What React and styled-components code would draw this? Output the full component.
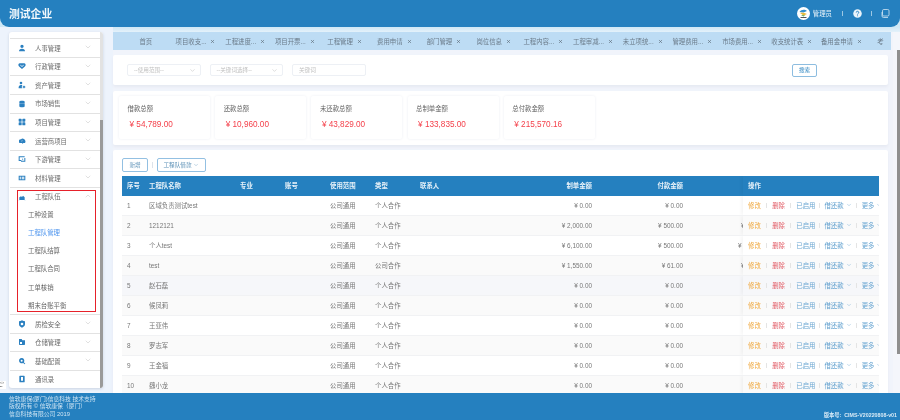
import React from 'react';
import styled, { createGlobalStyle } from 'styled-components';
import { ChevronDown, ChevronUp, X } from 'lucide-react';

const Global = createGlobalStyle`
  html, body { margin: 0; padding: 0; overflow: hidden; background: #eff3fb; }
  * { box-sizing: border-box; }
`;
const FONT = `"Liberation Sans", "Noto Sans CJK SC", sans-serif`;

const Shell = styled.div`
  position: relative; width: 900px; height: 420px; overflow: hidden;
  background: #f1f4fb; font-family: ${FONT}; font-size: 6.4px; color: #666;
  filter: blur(0.4px);
`;
const Header = styled.header`
  position: absolute; left: 0; top: 0; width: 900px; height: 27px; z-index: 3;
  background: #2580bf; border-radius: 0 0 9px 9px; color: #fff;
  display: flex; align-items: center; padding: 0 10px 0 9px;
`;
const TopBand = styled.div`
  position: absolute; left: 0; top: 0; width: 900px; height: 32px; z-index: 1;
  background: linear-gradient(#cfe8f6 85%, #e4f1fa 100%);
`;
const Title = styled.h1`
  margin: 0 0 1px; font-size: 10.8px; font-weight: 700; flex: 1; color: #f2f8fc;
`;
const Avatar = styled.svg` width: 13px; height: 13px; display: block; `;
const UserName = styled.span` margin: 0 10px 0 3px; font-size: 6.4px; color: #e8f2f9; `;
const HeadSep = styled.i` width: 1px; height: 5px; background: #9cc7e3; `;
const HeadIcon = styled.svg`
  width: 9px; height: 9px; display: block; margin: ${p => p.$m};
`;
const LeftBand = styled.div`
  position: absolute; left: 0; top: 27px; width: 113px; height: 366px; background: #edf3fc; z-index: 1;
`;
const Sidebar = styled.nav`
  position: absolute; left: 9px; top: 32px; width: 94px; height: 356px; background: #fff; z-index: 2;
  border-radius: 3px; padding-top: 6.3px; overflow: hidden; box-shadow: 0 1px 3px #c9d3e2;
`;
const ScrollTrack = styled.div`
  position: absolute; right: 0; top: 0; bottom: 0; width: 3px; background: #e2e2e2;
`;
const ScrollThumb = styled.div`
  position: absolute; right: 0; top: 88px; bottom: 0; width: 3px; background: #9a9a9a;
`;
const MenuRow = styled.div`
  height: 18.6px; margin: 0 3px 0 1px; border-top: 1px solid #e2e2e2;
  display: flex; align-items: center; position: relative; padding-left: 25px; color: #6b6b6b; font-size: 6.4px;
`;
const MenuGlyph = styled.svg`
  position: absolute; left: 8px; top: 4.5px; width: 8px; height: 8px; fill: #2b80c0;
`;
const Caret = styled.span`
  position: absolute; right: 8px; top: 4px; color: #c2c2c2; display: flex;
`;
const SubRow = styled.div`
  height: 18.1px; display: flex; align-items: center; padding-left: 19px; font-size: 6.4px;
  margin-right: 3px; color: ${p => (p.$active ? '#4d94ee' : '#666')};
`;
const RedBox = styled.div`
  position: absolute; left: 8px; top: 158px; width: 79px; height: 122px;
  border: 1px solid #e6212a; pointer-events: none;
`;
const Side = styled.span`
  position: absolute; left: 0; top: 381px; width: 6px; font-size: 3.6px; line-height: 4px; color: #555; background: #fff; z-index: 2;
`;
const Tabs = styled.div`
  position: absolute; left: 113px; top: 32px; width: 778px; height: 18px; background: #bddcf4; z-index: 2;
  display: flex; padding-left: 8px; overflow: hidden;
`;
const Tab = styled.div`
  flex: 0 0 49.7px; display: flex; align-items: center; justify-content: center; color: #6a7a88;
  white-space: nowrap; font-size: 6.4px;
`;
const LastTab = styled(Tab)` flex: 0 0 25px; justify-content: flex-start; padding-left: 11px; `;
const TabLabel = styled.span` margin-right: 4px; `;
const TabClose = styled(X)` color: #5d6b78; flex: none; `;
const Panel = styled.section`
  position: absolute; left: 113px; width: 775px; top: ${p => p.$top}px; height: ${p => p.$h}px; z-index: 1;
  background: #fff; border-radius: 2px; box-shadow: 0 2px 3px #e6e9f2;
`;
const SearchBar = styled.div`
  display: flex; align-items: center; height: 100%; padding: 0 71px 0 14px; gap: 9px;
`;
const Select = styled.div`
  width: 73.5px; height: 12.5px; border: 1px solid #edf0f5; border-radius: 2px; color: #c0c0c0;
  display: flex; align-items: center; justify-content: space-between; padding: 0 4px 0 6px; font-size: 5.6px;
`;
const KeywordInput = styled(Select)` justify-content: flex-start; `;
const SearchBtn = styled.button`
  margin-left: auto; width: 25px; height: 13px; padding: 0; background: #fff; font: 5.6px ${FONT};
  border: 1px solid #8dbde0; border-radius: 2px; color: #2580bf;
`;
const Cards = styled.div` display: flex; gap: 5.2px; padding: 5px 6px; `;
const Card = styled.div`
  width: 91px; height: 43px; background: #fff; border-radius: 2px; box-shadow: 0 0 3px #eceef4;
  padding: 9px 8.5px;
`;
const CardLabel = styled.div` font-size: 6.4px; color: #666; line-height: 7px; `;
const CardValue = styled.div` margin: 8px 0 0 2px; font-size: 8.2px; line-height: 9px; color: #f4414b; white-space: nowrap; `;
const Toolbar = styled.div`
  display: flex; align-items: center; height: 14px; margin: 8px 0 4px 9px;
`;
const ToolBtn = styled.button`
  height: 13.5px; width: ${p => p.$w}px; padding: 0; background: #fff; border: 1px solid #93c0e2;
  border-radius: 2px; color: #5f93b8; font: 5.6px ${FONT}; display: flex; align-items: center; justify-content: center; gap: 2px;
`;
const ToolSep = styled.i` width: 1px; height: 6px; background: #dde3ea; margin: 0 4px; `;
const TableWrap = styled.div` margin-left: 9px; width: 757px; `;
const Row = styled.div`
  position: relative; display: grid; overflow: hidden;
  grid-template-columns: 27px 91px 45px 45px 45px 45px 90px 82px 91px 1fr;
  align-items: center; height: ${p => (p.$head ? '19.5px' : '20px')};
  background: ${p => p.$head ? '#2580bf' : p.$bg};
  color: ${p => (p.$head ? '#e8f2f9' : '#777')};
  font-weight: ${p => (p.$head ? 700 : 400)};
  border-bottom: 1px solid ${p => (p.$head ? '#2580bf' : '#f1f2f4')};
  font-size: 6.4px;
`;
const Cell = styled.div`
  white-space: nowrap; text-align: ${p => (p.$right ? 'right' : 'left')};
  padding-left: ${p => (p.$seq ? '5px' : '0')}; color: inherit;
`;
const Peek = styled.span`
  position: absolute; left: ${p => p.$x}px; top: 50%; transform: translateY(-50%);
`;
const Fixed = styled.div`
  position: absolute; right: 0; top: 0; bottom: 0; width: 136px; display: flex; align-items: center;
  padding-left: 5px; background: ${p => (p.$head ? '#2580bf' : p.$bg)};
  box-shadow: -2px 0 3px rgba(0,0,0,0.04); white-space: nowrap;
`;
const Act = styled.span`
  color: ${p => p.$c}; display: inline-flex; align-items: center; gap: 2px; font-weight: 400;
`;
const ActSep = styled.i` width: 1px; height: 5px; background: #e4e4e4; margin: 0 ${p => p.$g}px; flex: none; `;
const Footer = styled.footer`
  position: absolute; left: 0; top: 393px; width: 900px; height: 27px; background: #2580bf; z-index: 4;
  color: #cfe4f3; font-size: 5.8px; padding: 2.5px 9px 0;
  display: flex; justify-content: space-between;
`;
const Copy = styled.div` line-height: 7.8px; `;
const Version = styled.div` align-self: flex-end; margin: 0 -6px 1px 0; font-size: 5.3px; font-weight: 700; color: #d9eaf6; `;
const PageBarTrack = styled.div` position: absolute; left: 893px; top: 32px; width: 7px; height: 361px; background: #f4f6fb; z-index: 1; `;
const PageBar = styled.div` position: absolute; left: 897px; top: 50px; width: 3px; height: 304px; background: #8f8f8f; z-index: 2; `;

const glyphs = {
  user: <path d="M12 2a5 5 0 1 1 0 10 5 5 0 0 1 0-10ZM3 22c0-5 3-8 9-8s9 3 9 8Z" />,
  heart: <path d="M1 9c0-4 4-5 6-5h10c2 0 6 1 6 5 0 3-7 9-11 12C8 18 1 12 1 9Zm5 0 6 6 6-6-1-1-5 4-5-4Z" />,
  asset: <path d="M9 2a4 4 0 1 1 0 8 4 4 0 0 1 0-8ZM2 22c-1-6 2-10 7-10 2 0 3 .5 4 1.5a6 6 0 0 0 0 8.500ZM18 14a4 4 0 1 1 0 8 4 4 0 0 1 0-8Zm0 2.500a1.500 1.500 0 1 0 0 3 1.500 1.500 0 0 0 0-3Z" />,
  market: <path d="M4 5c0-2 3-3 8-3s8 1 8 3v14c0 2-3 3-8 3s-8-1-8-3Zm8 7c3 0 6-.5 8-2v-1c-2 1.500-5 2-8 2s-6-.5-8-2v1c2 1.500 5 2 8 2Z" />,
  grid: <path d="M3 2h6a2 2 0 0 1 2 2v6a1 1 0 0 1-1 1H4a2 2 0 0 1-2-2V3a1 1 0 0 1 1-1Zm12 0h6a1 1 0 0 1 1 1v6a2 2 0 0 1-2 2h-6a1 1 0 0 1-1-1V4a2 2 0 0 1 2-2ZM4 13h6a1 1 0 0 1 1 1v6a2 2 0 0 1-2 2H3a1 1 0 0 1-1-1v-6a2 2 0 0 1 2-2Zm10 0h6a2 2 0 0 1 2 2v6a1 1 0 0 1-1 1h-6a2 2 0 0 1-2-2v-6a1 1 0 0 1 1-1Z" />,
  cloud: <path d="M3 14a6 6 0 0 1 6-7 7 7 0 0 1 12 3c2 2 2 6 0 8h-5l-3 4v-4H6c-2 0-3-2-3-4Zm7-1h3v-3l-4 3Z" />,
  screen: <path d="M2 4h18v3H5v8h5v3H2Zm20 5v11H9v-3h10V9Zm-9 1 3 3-3 3Z" />,
  panel: <path d="M2 5h20v14H2Zm3 3v3h4V8Zm6 0v3h8V8Zm-6 5v3h4v-3Zm6 0v3h8v-3Z" />,
  team: <path d="M4 22v-9l5-3 3 2 3-4 5 5v9ZM2 22h20v-1H2Z" />,
  shield: <path d="M12 1c3 2 6 3 9 3v9c0 5-4 8-9 10-5-2-9-5-9-10V4c3 0 6-1 9-3Zm0 7a4 4 0 1 0 0 8 4 4 0 0 0 0-8Z" />,
  store: <path d="M3 3h8l2 4h8v12a2 2 0 0 1-2 2H5a2 2 0 0 1-2-2Zm3 9v6h6v-6Z" />,
  search: <path d="M11 3a8 8 0 0 1 6.500 12.700L22 20l-2 2-4.500-4.300A8 8 0 1 1 11 3Zm0 5a3 3 0 1 0 0 6 3 3 0 0 0 0-6Z" />,
  phone: <path d="M6 2h12a2 2 0 0 1 2 2v16a2 2 0 0 1-2 2H6a2 2 0 0 1-2-2V4a2 2 0 0 1 2-2Zm3 4v11h6V6Z" />,
};

const menuTop = [
  ['人事管理', 'user'], ['行政管理', 'heart'], ['资产管理', 'asset'], ['市场销售', 'market'],
  ['项目管理', 'grid'], ['运营商项目', 'cloud'], ['下游管理', 'screen'], ['材料管理', 'panel'],
];
const subs = ['工种设置', '工程队管理', '工程队结算', '工程队合同', '工单核销', '期末台账平衡'];
const menuBottom = [['质检安全', 'shield', true], ['仓储管理', 'store', true], ['基础配置', 'search', true], ['通讯录', 'phone', false]];

const MenuItem = ({ label, icon, caret = true, open }) => (
  <MenuRow>
    <MenuGlyph viewBox="0 0 24 24">{glyphs[icon]}</MenuGlyph>
    {label}
    {caret && <Caret>{open ? <ChevronUp size={8} strokeWidth={1.5} /> : <ChevronDown size={8} strokeWidth={1.5} />}</Caret>}
  </MenuRow>
);

const tabs = ['项目收支...', '工程进度...', '项目开票...', '工程管理', '费用申请', '部门管理', '岗位信息', '工程内容...', '工程审减...', '未立项统...', '管理费用...', '市场费用...', '收支统计表', '备用金申请'];
const cards = [['借款总额', '¥  54,789.00'], ['还款总额', '¥  10,960.00'], ['未还款总额', '¥  43,829.00'], ['总制单金额', '¥  133,835.00'], ['总付款金额', '¥  215,570.16']];
const rows = [
  ['区域负责测试test', '公司通用', '个人合作', '¥ 0.00', '¥ 0.00', null],
  ['1212121', '公司通用', '个人合作', '¥ 2,000.00', '¥ 500.00', 619],
  ['个人test', '公司通用', '个人合作', '¥ 6,100.00', '¥ 500.00', 616],
  ['test', '公司通用', '公司合作', '¥ 1,550.00', '¥ 61.00', 619],
  ['赵石磊', '公司通用', '个人合作', '¥ 0.00', '¥ 0.00', null],
  ['候凤莉', '公司通用', '个人合作', '¥ 0.00', '¥ 0.00', null],
  ['王亚伟', '公司通用', '个人合作', '¥ 0.00', '¥ 0.00', null],
  ['罗志军', '公司通用', '个人合作', '¥ 0.00', '¥ 0.00', null],
  ['王金福', '公司通用', '个人合作', '¥ 0.00', '¥ 0.00', null],
  ['魏小龙', '公司通用', '个人合作', '¥ 0.00', '¥ 0.00', null],
];
const rowBg = i => (i === 4 ? '#f6f7fa' : i % 2 ? '#fafafa' : '#fff');

export default function App() {
  return (
    <Shell>
      <Global />
      <TopBand />
      <Header>
        <Title>测试企业</Title>
        <Avatar viewBox="0 0 26 26">
          <circle cx="13" cy="13" r="13" fill="#fff" />
          <path d="M5 10c3-5 11-6 15-2l-7 3Z" fill="#2f8fd0" />
          <path d="M6 12c4-1 10 0 14 2l-7 3Z" fill="#e8b93a" />
          <path d="M8 16c3 0 6 1 9 0l-4 3Z" fill="#5aa85a" />
          <rect x="7" y="20" width="12" height="2" fill="#555" />
        </Avatar>
        <UserName>管理员</UserName>
        <HeadSep />
        <HeadIcon viewBox="0 0 18 18" $m="0 9px 0 10px">
          <circle cx="9" cy="9" r="8.500" fill="#eaf3fa" />
          <path d="M6.500 7a2.500 2.500 0 1 1 3.500 2.300c-.8.400-1 .8-1 1.700" stroke="#2580bf" strokeWidth="1.800" fill="none" />
          <circle cx="9" cy="13.500" r="1" fill="#2580bf" />
        </HeadIcon>
        <HeadSep />
        <HeadIcon viewBox="0 0 18 18" $m="0 0 0 9px">
          <rect x="3" y="1" width="13" height="13" rx="2.500" stroke="#eaf3fa" strokeWidth="1.400" fill="none" />
          <path d="M2 6v8a3 3 0 0 0 3 3h9" stroke="#eaf3fa" strokeWidth="1.400" fill="none" />
        </HeadIcon>
      </Header>

      <LeftBand />
      <Sidebar>
        {menuTop.map(([l, i]) => <MenuItem key={l} label={l} icon={i} />)}
        <MenuItem label="工程队伍" icon="team" open />
        {subs.map((s, i) => <SubRow key={s} $active={i === 1}>{s}</SubRow>)}
        {menuBottom.map(([l, i, c]) => <MenuItem key={l} label={l} icon={i} caret={c} />)}
        <ScrollTrack />
        <ScrollThumb />
        <RedBox />
      </Sidebar>
      <Side>{'<>'}<br />▪▪</Side>

      <Tabs>
        <Tab>首页</Tab>
        {tabs.map(t => (
          <Tab key={t}>
            <TabLabel>{t}</TabLabel>
            <TabClose size={5} strokeWidth={3} />
          </Tab>
        ))}
        <LastTab>考</LastTab>
      </Tabs>

      <PageBarTrack />
      <PageBar />

      <Panel $top={55} $h={30}>
        <SearchBar>
          <Select>--使用范围--<ChevronDown size={7} strokeWidth={1.500} color="#b5b5b5" /></Select>
          <Select>--关键词选择--<ChevronDown size={7} strokeWidth={1.500} color="#b5b5b5" /></Select>
          <KeywordInput>关键词</KeywordInput>
          <SearchBtn>搜索</SearchBtn>
        </SearchBar>
      </Panel>

      <Panel $top={91} $h={54}>
        <Cards>
          {cards.map(([l, v]) => (
            <Card key={l}>
              <CardLabel>{l}</CardLabel>
              <CardValue>{v}</CardValue>
            </Card>
          ))}
        </Cards>
      </Panel>

      <Panel $top={150} $h={245}>
        <Toolbar>
          <ToolBtn $w={26}>新增</ToolBtn>
          <ToolSep />
          <ToolBtn $w={49}>工程队借款<ChevronDown size={6} strokeWidth={1.500} /></ToolBtn>
        </Toolbar>
        <TableWrap>
          <Row $head>
            <Cell $seq>序号</Cell><Cell>工程队名称</Cell><Cell>专业</Cell><Cell>账号</Cell>
            <Cell>使用范围</Cell><Cell>类型</Cell><Cell>联系人</Cell>
            <Cell $right>制单金额</Cell><Cell $right>付款金额</Cell><Cell />
            <Fixed $head>操作</Fixed>
          </Row>
          {rows.map((r, i) => (
            <Row key={i} $bg={rowBg(i)}>
              <Cell $seq>{i + 1}</Cell><Cell>{r[0]}</Cell><Cell /><Cell />
              <Cell>{r[1]}</Cell><Cell>{r[2]}</Cell><Cell />
              <Cell $right>{r[3]}</Cell><Cell $right>{r[4]}</Cell><Cell />
              {r[5] && <Peek $x={r[5]}>¥</Peek>}
              <Fixed $bg={rowBg(i)}>
                <Act $c="#f0a83e">修改</Act><ActSep $g={5.2} />
                <Act $c="#e2606a">删除</Act><ActSep $g={5.2} />
                <Act $c="#6aa6d2">已启用</Act><ActSep $g={4} />
                <Act $c="#5f9fce">借还款<ChevronDown size={6} strokeWidth={1.500} /></Act><ActSep $g={4.5} />
                <Act $c="#6aa6d2">更多<ChevronDown size={6} strokeWidth={1.500} /></Act>
              </Fixed>
            </Row>
          ))}
        </TableWrap>
      </Panel>

      <Footer>
        <Copy>信软康保(厦门)信息科技 技术支持<br />版权所有 © 信软康保（厦门）<br />信息科技有限公司 2019</Copy>
        <Version>版本号:&nbsp; CIMS-V20220808-v01</Version>
      </Footer>
    </Shell>
  );
}
